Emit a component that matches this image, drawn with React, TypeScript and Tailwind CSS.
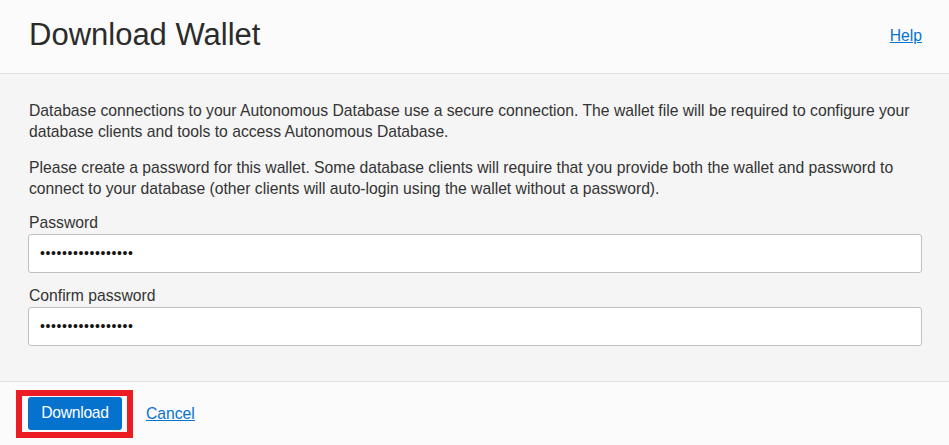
export default function App() {
  return (
    <div className="w-[949px] h-[445px] flex flex-col bg-[#f5f5f5] text-[#161513] font-['Liberation_Sans',Arial,sans-serif] overflow-hidden">
      <header className="h-[74px] shrink-0 flex items-start justify-between bg-[#fbfbfb] border-b border-[#e0e0e0] pl-[29px] pr-[27px]">
        <h1 className="text-[31px] leading-none mt-[19px] text-[#2b2b2b]">Download Wallet</h1>
        <a href="#" className="mt-[24px] text-[15.7px] text-[#0572ce] underline">
          Help
        </a>
      </header>

      <main className="flex-1 pl-[28px] pr-[27px] pt-[26px] text-[15.7px] leading-[21px] text-[#333]">
        <p className="pl-px">
          Database connections to your Autonomous Database use a secure connection. The wallet file will be required to
          configure your database clients and tools to access Autonomous Database.
        </p>
        <p className="pl-px mt-[15px]">
          Please create a password for this wallet. Some database clients will require that you provide both the wallet
          and password to connect to your database (other clients will auto-login using the wallet without a password).
        </p>
        <Field label="Password" className="mt-[13px]" />
        <Field label="Confirm password" className="mt-[12px]" />
      </main>

      <footer className="h-[64px] shrink-0 flex items-center gap-[13px] bg-[#fbfbfb] border-t border-[#e0e0e0] pl-[16px]">
        <div className="border-[6px] border-[#ec1c24] pl-[6px] pr-[5px] pt-px pb-[2px]">
          <button className="h-[33px] w-[94px] rounded-[3px] bg-[#0572ce] text-white text-[15.7px] tracking-[-0.3px]">
            Download
          </button>
        </div>
        <a href="#" className="text-[15.7px] text-[#0572ce] underline">
          Cancel
        </a>
      </footer>
    </div>
  );
}

function Field({ label, className }: { label: string; className?: string }) {
  return (
    <div className={className}>
      <label className="block pl-px leading-[21px]">{label}</label>
      <div className="mt-px h-[39px] bg-white border border-[#bdbfc4] rounded-[3px] flex items-center pl-[11px] text-[14px] tracking-[0.6px] text-[#161513]">
        •••••••••••••••••
      </div>
    </div>
  );
}
